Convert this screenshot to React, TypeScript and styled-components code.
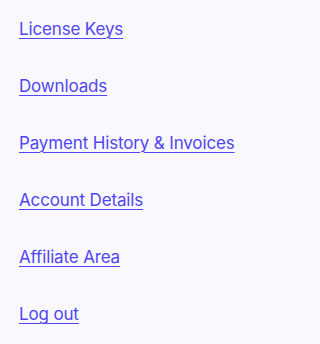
import React from 'react';
import styled, { createGlobalStyle } from 'styled-components';

const GlobalStyle = createGlobalStyle`
  html, body {
    margin: 0;
    padding: 0;
    background: #f8f8fd;
  }
  body {
    font-family: Inter, "Liberation Sans", sans-serif;
  }
`;

const Nav = styled.nav`
  display: flex;
  flex-direction: column;
  gap: 33px;
  padding: 17px 19px;
`;

const NavLink = styled.a`
  font-size: 17px;
  line-height: 24px;
  color: #5246f0;
  text-decoration: underline;
  text-underline-offset: 3px;
  text-decoration-thickness: 1px;
  align-self: flex-start;
  letter-spacing: -0.15px;
`;

const links = [
  'License Keys',
  'Downloads',
  'Payment History & Invoices',
  'Account Details',
  'Affiliate Area',
  'Log out',
];

export default function App(): JSX.Element {
  return (
    <>
      <GlobalStyle />
      <Nav>
        {links.map((label) => (
          <NavLink key={label} href="#">
            {label}
          </NavLink>
        ))}
      </Nav>
    </>
  );
}
